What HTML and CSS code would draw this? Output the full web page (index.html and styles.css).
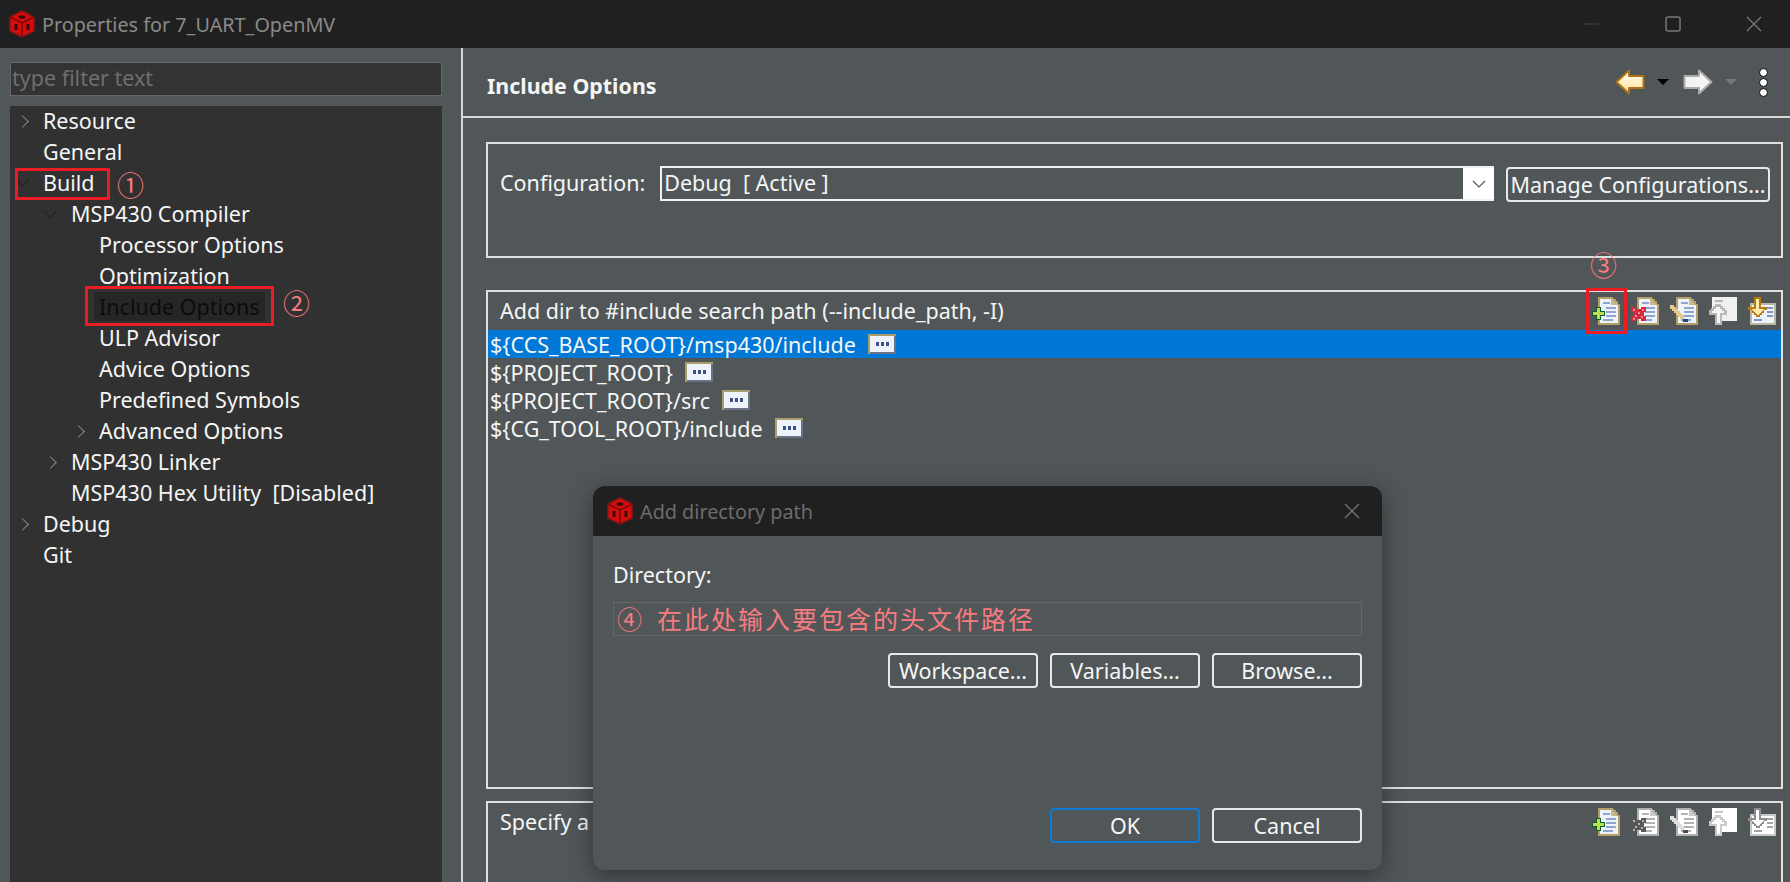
FILE: index.html
```html
<!DOCTYPE html>
<html lang="en">
<head>
  <meta charset="UTF-8">
  <title>Properties for 7_UART_OpenMV</title>
  <link rel="stylesheet" href="styles.css">
</head>
<body>
<svg class="defs" width="0" height="0">
  <defs>
    <symbol id="dice" viewBox="0 0 28 28">
      <polygon points="14,1 26,7 26,21 14,27 2,21 2,7" fill="#d40c0c" stroke="#8c1414" stroke-width="1.5"/>
      <path d="M2 7L14 13L26 7M14 13V27" stroke="#7a0808" stroke-width="1.5" fill="none"/>
      <ellipse cx="14" cy="7" rx="3.4" ry="1.8" fill="#3a0a0a"/>
      <rect x="6.5" y="14" width="3" height="6" fill="#3a0a0a"/>
      <rect x="18.5" y="14" width="3" height="6" fill="#3a0a0a"/>
    </symbol>
    <symbol id="doc" viewBox="0 0 28 28" shape-rendering="crispEdges">
      <path d="M6 0H20L22 2H24V4H26V7H28V28H6Z" fill="#b59f68"/>
      <path d="M8 2H19V4H21V6H23V8H26V26H8Z" fill="#eef2fa"/>
      <path d="M19 2H21V4H23V6H25V8H19Z" fill="#c7b98c"/>
      <path d="M11 5H18V7H11ZM14 10H24V12H14ZM14 14H24V16H14ZM14 18H24V20H14ZM11 22H21V24H11Z" fill="#8fa5cc"/>
    </symbol>
    <symbol id="add" viewBox="0 0 28 28" shape-rendering="crispEdges">
      <use href="#doc"/>
      <path d="M4 10H9V14H13V19H9V23H4V19H0V14H4Z" fill="#0d5f2c"/>
      <path d="M5 11H8V15H12V18H8V22H5V18H1V15H5Z" fill="#c2dc52"/>
    </symbol>
    <symbol id="del" viewBox="0 0 28 28" shape-rendering="crispEdges">
      <use href="#doc"/>
      <path d="M0 10H5V12H10V10H15V15H13V19H15V24H10V22H5V24H0V19H2V15H0Z" fill="#d8283c"/>
      <path d="M2 12H4V14H2ZM11 12H13V14H11ZM7 15H9V17H7ZM4 18H6V20H4ZM10 19H12V21H10ZM2 21H4V23H2Z" fill="#f08a96"/>
    </symbol>
    <symbol id="edit" viewBox="0 0 28 28" shape-rendering="crispEdges">
      <use href="#doc"/>
      <path d="M0 8H4V10H6V12H8V14H10V16H12V18H14V22H10V20H8V18H6V16H4V14H2V12H0Z" fill="#e6c98c"/>
      <path d="M13 22H18V25H13Z" fill="#1f4a80"/>
    </symbol>
    <symbol id="up" viewBox="0 0 28 28" shape-rendering="crispEdges">
      <path d="M3 0H28V24H13V14H3Z" fill="#f0f0f0"/>
      <path d="M6 3H14V5H6Z" fill="#b4b4b4"/>
      <path d="M10 7H12V9H14V11H16V13H18V18H13V28H6V18H0V13H2V11H4V9H6V7Z" fill="#b8b8b8"/>
      <path d="M9 10H11V12H13V14H15V16H11V26H8V16H3V14H5V12H7V10Z" fill="#f4f4f4"/>
    </symbol>
    <symbol id="down" viewBox="0 0 28 28" shape-rendering="crispEdges">
      <path d="M2 6H28V28H2Z" fill="#b8b8a0"/>
      <path d="M4 8H26V26H4Z" fill="#eef2fa"/>
      <path d="M19 10H25V12H19ZM19 14H25V16H19ZM19 18H25V20H19ZM6 22H14V24H6Z" fill="#7f97c2"/>
      <path d="M6 0H13V10H19V13H16V16H14V18H12V20H8V18H6V16H4V13H0V10H6Z" fill="#b57c16"/>
      <path d="M8 2H11V12H16L10 18L3 12H8Z" fill="#ffe9a8"/>
    </symbol>
    <symbol id="dots" viewBox="0 0 28 20" shape-rendering="crispEdges">
      <rect width="28" height="20" fill="#6a7388"/>
      <path d="M0 0H28V2H2V20H0Z" fill="#a99f6c"/>
      <rect x="2" y="2" width="24" height="16" fill="#eef2fa"/>
      <path d="M8 8H11V12H8ZM13 8H16V12H13ZM18 8H21V12H18Z" fill="#3c5282"/>
    </symbol>
  </defs>
</svg>

<div class="window">
  <div class="titlebar">
    <svg class="logo"><use href="#dice"/></svg>
    <span class="title">Properties for 7_UART_OpenMV</span>
    <div class="winctl">
      <svg width="16" height="16" viewBox="0 0 16 16"><path d="M0 8H15" stroke="#444" stroke-width="1"/></svg>
      <svg width="16" height="16" viewBox="0 0 16 16"><rect x="1" y="1" width="14" height="14" rx="2" fill="none" stroke="#777" stroke-width="1.5"/></svg>
      <svg width="16" height="16" viewBox="0 0 16 16"><path d="M1 1L15 15M15 1L1 15" stroke="#777" stroke-width="1.3"/></svg>
    </div>
  </div>

  <div class="main">
    <div class="side">
      <div class="filter">type filter text</div>
      <ul class="tree">
        <li class="row d0"><i class="chev right"></i>Resource</li>
        <li class="row d0">General</li>
        <li class="row d0"><i class="chev open"></i>Build</li>
        <li class="row d1"><i class="chev open"></i>MSP430 Compiler</li>
        <li class="row d2">Processor Options</li>
        <li class="row d2">Optimization</li>
        <li class="row d2 current"><span>Include Options</span></li>
        <li class="row d2">ULP Advisor</li>
        <li class="row d2">Advice Options</li>
        <li class="row d2">Predefined Symbols</li>
        <li class="row d2"><i class="chev right"></i>Advanced Options</li>
        <li class="row d1"><i class="chev right"></i>MSP430 Linker</li>
        <li class="row d1">MSP430 Hex Utility&nbsp; [Disabled]</li>
        <li class="row d0"><i class="chev right"></i>Debug</li>
        <li class="row d0">Git</li>
      </ul>
    </div>

    <div class="content">
      <div class="head">
        <h1>Include Options</h1>
        <div class="nav">
          <svg class="arrow" width="30" height="26" viewBox="0 0 30 26">
            <defs><linearGradient id="gb" x1="0" y1="0" x2="0" y2="1"><stop offset="0" stop-color="#fff"/><stop offset="1" stop-color="#ffdf8e"/></linearGradient></defs>
            <path d="M1.5 13L14 1.5V7H28.5V19H14V24.5Z" fill="url(#gb)" stroke="#ae7314" stroke-width="2" stroke-linejoin="round"/>
          </svg>
          <i class="caret"></i>
          <svg class="arrow fwd" width="30" height="26" viewBox="0 0 30 26">
            <path d="M28.5 13L16 1.5V7H1.5V19H16V24.5Z" fill="#f4f4f4" stroke="#ababab" stroke-width="2" stroke-linejoin="round"/>
          </svg>
          <i class="caret off"></i>
          <div class="more"><b></b><b></b><b></b></div>
        </div>
      </div>

      <div class="body">
        <div class="group config">
          <label>Configuration:</label>
          <div class="combo"><span>Debug&nbsp; [ Active ]</span><em><svg width="14" height="8" viewBox="0 0 14 8"><path d="M1 1L7 7L13 1" fill="none" stroke="#555" stroke-width="1.2"/></svg></em></div>
          <button class="btn manage">Manage Configurations...</button>
        </div>

        <div class="group paths">
          <div class="ghead">
            <span>Add dir to #include search path (--include_path, -I)</span>
            <div class="tools">
              <svg><use href="#add"/></svg>
              <svg><use href="#del"/></svg>
              <svg><use href="#edit"/></svg>
              <svg><use href="#up"/></svg>
              <svg><use href="#down"/></svg>
            </div>
          </div>
          <ul class="list">
            <li class="sel">${CCS_BASE_ROOT}/msp430/include <svg class="more-ic"><use href="#dots"/></svg></li>
            <li>${PROJECT_ROOT} <svg class="more-ic"><use href="#dots"/></svg></li>
            <li>${PROJECT_ROOT}/src <svg class="more-ic"><use href="#dots"/></svg></li>
            <li>${CG_TOOL_ROOT}/include <svg class="more-ic"><use href="#dots"/></svg></li>
          </ul>
        </div>

        <div class="group files">
          <div class="ghead">
            <span>Specify a preinclude file (--preinclude)</span>
            <div class="tools">
              <svg><use href="#add"/></svg>
              <svg class="off"><use href="#del"/></svg>
              <svg class="off"><use href="#edit"/></svg>
              <svg class="off"><use href="#up"/></svg>
              <svg class="off"><use href="#down"/></svg>
            </div>
          </div>
        </div>
      </div>
    </div>
  </div>

  <!-- red notes drawn on top of the screenshot -->
  <div class="box box-build"></div>
  <div class="box box-include"></div>
  <div class="box box-add"></div>
  <span class="num num1">①</span>
  <span class="num num2">②</span>
  <span class="num num3">③</span>

  <div class="dialog">
    <div class="dtitle">
      <svg class="logo"><use href="#dice"/></svg>
      <span class="title">Add directory path</span>
      <svg class="dclose" width="16" height="16" viewBox="0 0 16 16"><path d="M1 1L15 15M15 1L1 15" stroke="#777" stroke-width="1.3"/></svg>
    </div>
    <div class="dbody">
      <label>Directory:</label>
      <div class="dinput"><span class="n4">④</span>在此处输入要包含的头文件路径</div>
      <div class="drow">
        <button class="btn">Workspace...</button>
        <button class="btn">Variables...</button>
        <button class="btn">Browse...</button>
      </div>
      <div class="drow dfoot">
        <button class="btn ok">OK</button>
        <button class="btn">Cancel</button>
      </div>
    </div>
  </div>
</div>
</body>
</html>
```

FILE: styles.css
```css
* {
  box-sizing: border-box;
}
html, body {
  margin: 0;
  height: 100%;
  overflow: hidden;
}
body {
  background: #515658;
  color: #f4f6f6;
  font-family: "Noto Sans", "Open Sans", sans-serif;
  font-size: 21.5px;
}
.defs {
  position: absolute;
}
.window {
  position: relative;
  width: 1790px;
  height: 882px;
  display: flex;
  flex-direction: column;
  overflow: hidden;
}
.titlebar {
  flex: none;
  height: 48px;
  background: #202020;
  display: flex;
  align-items: center;
  padding-left: 8px;
}
.logo {
  width: 28px;
  height: 28px;
  flex: none;
}
.title {
  margin-left: 6px;
  color: #8a8a8a;
  font-size: 19.8px;
}
.winctl {
  margin-left: auto;
  display: flex;
  gap: 65px;
  padding-right: 28px;
}
.main {
  flex: 1;
  display: flex;
  min-height: 0;
}

/* left side */
.side {
  flex: none;
  width: 463px;
  border-right: 2px solid #d8d8d8;
  padding: 14px 19px 0 10px;
  display: flex;
  flex-direction: column;
}
.filter {
  height: 34px;
  line-height: 29px;
  background: #333;
  border: 1px solid #666;
  padding-left: 1px;
  color: #6e6e6e;
}
.tree {
  flex: 1;
  list-style: none;
  margin: 10px 0 0;
  padding: 0;
  background: #313131;
}
.row {
  position: relative;
  height: 31px;
  line-height: 29px;
  white-space: nowrap;
}
.d0 { padding-left: 33px; }
.d1 { padding-left: 61px; }
.d2 { padding-left: 89px; }
.chev {
  position: absolute;
  width: 9px;
  height: 9px;
  border-right: 1.5px solid #888;
  border-top: 1.5px solid #888;
  top: 11px;
}
.chev.right { transform: rotate(45deg); }
.chev.open {
  transform: rotate(135deg);
  border-color: #1e1e1e;
  top: 8px;
}
.d0 .chev { left: 8px; }
.d1 .chev { left: 36px; }
.d2 .chev { left: 64px; }
.current {
  color: #0c0c0c;
}
.current span {
  display: inline-block;
  background: #262626;
  height: 29px;
  line-height: 29px;
  margin-left: -5px;
  padding: 0 5px;
}

/* right side */
.content {
  flex: 1;
  min-width: 0;
  display: flex;
  flex-direction: column;
}
.head {
  flex: none;
  height: 70px;
  border-bottom: 2px solid #d8d8d8;
  display: flex;
  align-items: center;
  padding: 6px 0 0 24px;
}
h1 {
  margin: 0;
  font-size: 21.4px;
  font-weight: 700;
}
.nav {
  margin-left: auto;
  display: flex;
  align-items: center;
  padding-right: 22px;
  margin-top: -6px;
}
.caret {
  width: 0;
  height: 0;
  border-left: 6px solid transparent;
  border-right: 6px solid transparent;
  border-top: 6px solid #000;
  margin: 0 14px 0 12px;
}
.caret.off {
  border-top-color: #777;
  margin-right: 22px;
}
.more b {
  display: block;
  width: 9px;
  height: 9px;
  border-radius: 50%;
  background: #fff;
  border: 1px solid #000;
  margin: 1px 0;
}
.body {
  flex: 1;
  padding: 24px 7px 0 23px;
  display: flex;
  flex-direction: column;
  gap: 12px;
}
.group {
  border: 2px solid #e0e0e0;
  flex: none;
}
.config {
  height: 116px;
  margin-bottom: 20px;
  display: flex;
  align-items: flex-start;
  padding: 22px 11px 0 12px;
}
.config label {
  margin: 2px 15px 0 0;
  white-space: nowrap;
}
.combo {
  flex: 1;
  height: 35px;
  border: 2px solid #f0f0f0;
  border-right: 0;
  display: flex;
  line-height: 30px;
  padding-left: 2px;
  margin-right: 12px;
}
.combo span {
  flex: 1;
}
.combo em {
  width: 31px;
  background: #fff;
  display: flex;
  align-items: center;
  justify-content: center;
}
.btn {
  font: inherit;
  color: #f4f6f6;
  background: transparent;
  border: 2px solid #e8e8e8;
  border-radius: 4px;
  padding: 0;
  height: 35px;
  width: 150px;
  white-space: nowrap;
}
.manage {
  width: 264px;
  margin-top: 1px;
}
.paths {
  height: 499px;
}
.ghead {
  height: 38px;
  display: flex;
  align-items: center;
  justify-content: space-between;
  padding: 0 5px 2px 12px;
}
.tools {
  display: flex;
  gap: 11px;
  margin-top: 2px;
}
.tools svg {
  width: 28px;
  height: 28px;
  overflow: hidden;
}
.tools .off {
  filter: grayscale(1) brightness(1.1);
}
.list {
  list-style: none;
  margin: 0;
  padding: 0;
}
.list li {
  height: 28px;
  line-height: 27px;
  padding-left: 2px;
  display: flex;
  align-items: center;
  gap: 12px;
}
.list .sel {
  background: #0078d7;
}
.more-ic {
  width: 28px;
  height: 20px;
  flex: none;
}
.files {
  height: 120px;
}

/* annotations */
.box {
  position: absolute;
  border: 3px solid #ec1c24;
}
.box-build {
  left: 15px;
  top: 168px;
  width: 95px;
  height: 32px;
}
.box-include {
  left: 85px;
  top: 286px;
  width: 189px;
  height: 40px;
}
.box-add {
  left: 1586px;
  top: 288px;
  width: 41px;
  height: 46px;
}
.num {
  position: absolute;
  font-family: "Noto Sans CJK SC", sans-serif;
  font-size: 27px;
  line-height: 30px;
  color: #f67c80;
}
.num1 { left: 117px; top: 170px; }
.num2 { left: 283px; top: 288px; }
.num3 { left: 1590px; top: 250px; }

/* dialog */
.dialog {
  position: absolute;
  left: 593px;
  top: 486px;
  width: 789px;
  height: 384px;
  border-radius: 12px;
  overflow: hidden;
  background: #515658;
  box-shadow: 0 6px 24px rgba(0, 0, 0, 0.4);
  display: flex;
  flex-direction: column;
}
.dtitle {
  flex: none;
  height: 50px;
  background: #202020;
  display: flex;
  align-items: center;
  padding: 0 20px 0 13px;
}
.dtitle .title {
  color: #6c6c6c;
}
.dclose {
  margin-left: auto;
  margin-right: 2px;
}
.dbody {
  flex: 1;
  padding: 24px 20px 27px 20px;
  display: flex;
  flex-direction: column;
}
.dbody label {
  line-height: 30px;
}
.dinput {
  margin-top: 12px;
  height: 34px;
  border: 1px solid #666;
  padding-left: 3px;
  line-height: 31px;
  color: #f67c80;
  font-family: "Noto Sans CJK SC", sans-serif;
  font-size: 25px;
  letter-spacing: 2px;
  white-space: nowrap;
}
.n4 {
  margin-right: 13px;
}
.drow {
  display: flex;
  justify-content: flex-end;
  gap: 12px;
  margin-top: 17px;
}
.dfoot {
  margin-top: auto;
}
.ok {
  border-color: #0e7ad4;
}
```
